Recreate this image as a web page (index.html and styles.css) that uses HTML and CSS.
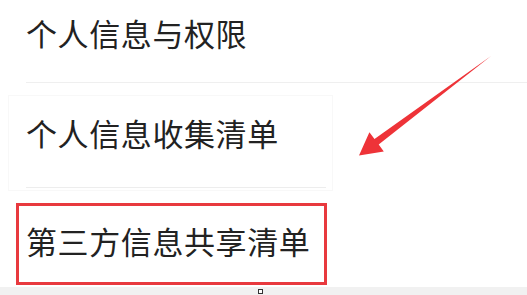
FILE: index.html
```html
<!DOCTYPE html>
<html lang="zh-CN">
<head>
    <meta charset="UTF-8">
    <meta name="viewport" content="width=device-width, initial-scale=1.0">
    <title>个人信息与权限</title>
    <link rel="stylesheet" href="styles.css">
</head>
<body>
    <div class="menu">
        <div class="menu-item first">个人信息与权限</div>
        <!-- 截图拼接的一段 -->
        <div class="snippet">
            <div class="menu-item second">个人信息收集清单</div>
        </div>
        <div class="highlight">
            <div class="menu-item third">第三方信息共享清单</div>
        </div>
    </div>
    <div class="bottom-bar">
        <span class="bar-square"></span>
    </div>
    <svg class="arrow" width="527" height="295" viewBox="0 0 527 295">
        <polygon points="491,56 374.5,139 369.4,132.2 359,155.5 383.8,151.4 378.7,144.6" fill="#ee3338"/>
    </svg>
</body>
</html>
```

FILE: styles.css
```css
body {
    font-family: "Noto Sans CJK SC", "Noto Sans", sans-serif;
    margin: 0;
    padding: 0;
    background-color: white;
    color: #222;
    width: 527px;
    height: 295px;
    overflow: hidden;
    position: relative;
}
.menu {
    height: 287px;
}
.menu-item {
    font-size: 31px;
    line-height: 31px;
    letter-spacing: 0.6px;
}
.first {
    margin-left: 26px;
    padding-top: 17px;
    height: 65px;
    border-bottom: 1px solid #efefef;
}
.snippet {
    margin: 12px 0 0 8px;
    width: 323px;
    height: 94px;
    border: 1px solid #f8f8f8;
}
.second {
    margin: 0 6px 0 17px;
    padding-top: 21px;
    height: 70px;
    border-bottom: 1px solid #ededed;
}
.highlight {
    margin: 12px 0 0 16px;
    width: 305px;
    height: 76px;
    border: 3px solid #e8393e;
}
.third {
    padding: 19px 0 0 7px;
}
.bottom-bar {
    height: 8px;
    background-color: #f1f1f1;
    display: flex;
    justify-content: center;
    align-items: flex-end;
    padding-right: 6px;
}
.bar-square {
    width: 3px;
    height: 3px;
    border: 1px solid #333;
    background-color: white;
    margin-bottom: 1px;
}
.arrow {
    position: absolute;
    left: 0;
    top: 0;
}
```
